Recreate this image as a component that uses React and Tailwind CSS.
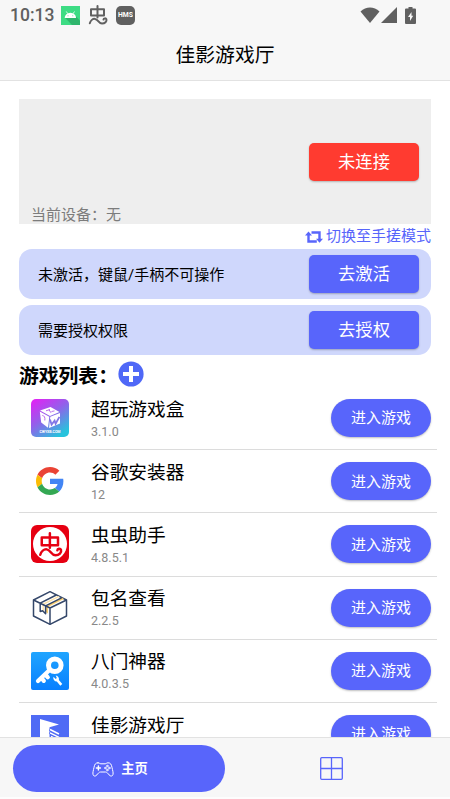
import React from 'react';

const ChongIcon = ({ className }) => (
  <svg viewBox="0 0 20 20" className={className} fill="none" stroke="currentColor" strokeWidth="2" strokeLinecap="round" strokeLinejoin="round">
    <path d="M3 4.300h13v6.200H3zM9.500 1v11.500" />
    <path d="M1.800 18.200c.8-2.600 3-4.600 5.200-4.300 3.200.4 3.400 4.700 7 4.700 3 0 5-2.200 4.400-4.200-.5-1.500-2.800-1.300-2.900.2" />
  </svg>
);

const AndroidIcon = () => (
  <svg viewBox="0 0 19 19" className="h-[19px] w-[19px]">
    <rect width="19" height="19" fill="#3ddc84" />
    <path d="M3.800 11.600L11 19h8v-4.500L14.500 10z" fill="#2fb56c" />
    <path d="M3.700 12a5.700 5.300 0 0 1 11.400 0z" fill="#fff" />
    <path d="M5.300 5.500l1.500 2.300M13.500 5.500L12 7.800" stroke="#fff" strokeWidth=".8" />
    <circle cx="7" cy="9.800" r=".5" fill="#3ddc84" />
    <circle cx="11.800" cy="9.800" r=".5" fill="#3ddc84" />
  </svg>
);

const BoxwIcon = () => (
  <svg viewBox="0 0 38 38" className="h-[38px] w-[38px]">
    <defs>
      <linearGradient id="cw" x1="0" y1="0" x2=".7" y2="1">
        <stop offset="0" stopColor="#e81df5" />
        <stop offset=".5" stopColor="#9360ea" />
        <stop offset="1" stopColor="#27c3dc" />
      </linearGradient>
    </defs>
    <rect width="38" height="38" rx="5" fill="url(#cw)" />
    <path d="M9 11.500L19.500 8l9 5-9.500 4z" fill="#fff" />
    <path d="M8.800 12.600l9.500 5.200-1.300 11-6.800-5.300z" fill="#fff" />
    <path d="M19.300 17.800l9.700-3.900v10.500l-11 4.600z" fill="#fff" />
    <path d="M19 20.500l1.600 5 3-3.800 1 3 3.800-6.800" fill="none" stroke="#8276e6" strokeWidth="1.800" />
    <path d="M15 11.800l4-1.300M18 10.800l2 3M20.500 12.500l3-.6" stroke="#b35cea" strokeWidth=".9" />
    <path d="M11.300 16.500c2 0 3 2 2.500 5" fill="none" stroke="#b35cea" strokeWidth=".9" />
    <text x="19" y="34" textAnchor="middle" fontSize="3.600" fontWeight="700" fill="#fff" fontFamily="Roboto, sans-serif" textLength="21">CWYXB.COM</text>
  </svg>
);

const GoogleIcon = () => (
  <svg viewBox="0 0 48 48" className="h-[28px] w-[28px]">
    <path fill="#ea4335" d="M24 9.500c3.540 0 6.710 1.220 9.210 3.600l6.850-6.850C35.900 2.380 30.470 0 24 0 14.620 0 6.510 5.380 2.560 13.220l7.980 6.190C12.430 13.720 17.740 9.500 24 9.500z" />
    <path fill="#4285f4" d="M46.980 24.550c0-1.570-.15-3.090-.38-4.550H24v9.020h12.940c-.58 2.960-2.260 5.480-4.780 7.180l7.730 6c4.510-4.180 7.090-10.360 7.090-17.650z" />
    <path fill="#fbbc05" d="M10.530 28.590c-.48-1.450-.76-2.990-.76-4.590s.27-3.140.76-4.590l-7.980-6.190C.92 16.460 0 20.120 0 24c0 3.880.92 7.540 2.560 10.780l7.970-6.190z" />
    <path fill="#34a853" d="M24 48c6.480 0 11.930-2.130 15.890-5.810l-7.730-6c-2.150 1.450-4.920 2.300-8.160 2.300-6.260 0-11.570-4.220-13.470-9.910l-7.980 6.190C6.510 42.620 14.620 48 24 48z" />
  </svg>
);

const ChongAppIcon = () => (
  <div className="flex h-[38px] w-[38px] items-center justify-center rounded-md bg-[#e60012]">
    <div className="flex h-[34px] w-[34px] items-center justify-center rounded-full bg-white text-[#e60012]">
      <ChongIcon className="h-[25px] w-[25px]" />
    </div>
  </div>
);

const PackageIcon = () => (
  <svg viewBox="0 0 38 38" className="h-[38px] w-[38px]" fill="none" stroke="#34476a" strokeWidth="1.500" strokeLinejoin="round">
    <path d="M2.500 11L19 2.700 35.500 11v16L19 35.300 2.500 27z" fill="#fff" />
    <path d="M14.800 16.800L31 8.800l2 1.200-16 8v6.600l-2.200-1.600z" fill="#fbd071" stroke="none" />
    <path d="M11.500 14.800L27.200 7l1.500.8-15.800 8v6.400l-1.400.5z" fill="#fde3a8" stroke="none" />
    <path d="M2.500 11L19 19l16.500-8M19 19v16.300M9.200 14.200L25.300 6M14.600 16.800L30.600 8.800M9.200 14.200v8.300l2.400-.7 3 2.900v-7.900" />
  </svg>
);

const KeyIcon = () => (
  <svg viewBox="0 0 38 38" className="h-[38px] w-[38px]">
    <defs>
      <linearGradient id="key" x1="0" y1="0" x2="0" y2="1">
        <stop offset="0" stopColor="#20a5ff" />
        <stop offset="1" stopColor="#087fff" />
      </linearGradient>
    </defs>
    <rect width="38" height="38" rx="2" fill="url(#key)" />
    <circle cx="23.800" cy="13.200" r="6.300" fill="none" stroke="#fff" strokeWidth="5" />
    <path d="M18.300 18.300L7 29M10.500 26l2.300 2.800M14.300 22.500l2.500 2.800" stroke="#fff" strokeWidth="4.200" strokeLinecap="round" />
    <path d="M22.500 24.800a3.600 3.600 0 0 0 3.300 4.800l3.500 4.200 2-1.900-3.400-4a3.600 3.600 0 0 0-3.200-4.400l1.100 2.400-1.100 1.200z" fill="#fff" />
  </svg>
);

const JiayingIcon = () => (
  <svg viewBox="0 0 38 38" className="h-[38px] w-[38px]">
    <rect width="38" height="38" fill="#4f6bf5" />
    <path d="M9 4l19 5.500-9.500 2.800V27H9z" fill="#fff" />
    <path d="M18.500 14.500l10 4.500M18.500 17.500l9.500 4.300M20 21l7 3.500" stroke="#4f6bf5" strokeWidth="3" />
    <path d="M19 14.500l9 4.500M19 17.800l9 4.500M20 21.500l7 3.500" stroke="#fff" strokeWidth="1.500" />
  </svg>
);

const GamepadIcon = () => (
  <svg viewBox="0 0 22 15" className="h-[15px] w-[22px]" fill="none" stroke="#fff" strokeWidth="1" strokeLinecap="round" strokeLinejoin="round">
    <path d="M6 .8c1.600 0 1.600 1 3 1h4c1.400 0 1.400-1 3-1 2.600 0 3.300 1.500 4 4.600.6 2.900 1.400 5.300 1 7-.4 2-2.500 2.200-3.900.5-1.300-1.600-2.200-2.900-3.600-2.900h-5C7.100 10 6.200 11.300 4.900 12.900 3.500 14.600 1.400 14.400 1 12.400c-.4-1.700.4-4.100 1-7C2.700 2.300 3.400.8 6 .8z" />
    <path d="M6.400 4.100v4M4.400 6.100h4" strokeWidth="1.500" />
    <g strokeWidth=".9">
      <circle cx="15.300" cy="4" r=".8" />
      <circle cx="15.300" cy="8" r=".8" />
      <circle cx="13.300" cy="6" r=".8" />
      <circle cx="17.300" cy="6" r=".8" />
    </g>
  </svg>
);

const games = [
  { name: '超玩游戏盒', version: '3.1.0', icon: BoxwIcon },
  { name: '谷歌安装器', version: '12', icon: GoogleIcon },
  { name: '虫虫助手', version: '4.8.5.1', icon: ChongAppIcon },
  { name: '包名查看', version: '2.2.5', icon: PackageIcon },
  { name: '八门神器', version: '4.0.3.5', icon: KeyIcon },
  { name: '佳影游戏厅', version: '', icon: JiayingIcon },
];

const notices = [
  { text: '未激活，键鼠/手柄不可操作', action: '去激活' },
  { text: '需要授权权限', action: '去授权' },
];

const StatusBar = () => (
  <div className="flex h-[30px] items-center pl-[10px] pr-[34px] text-[#606060]">
    <span className="w-[50px] pt-[2px] text-[17.500px] font-medium leading-none">10:13</span>
    <div className="ml-px flex items-center">
      <AndroidIcon />
      <ChongIcon className="ml-[8px] h-5 w-5" />
      <span className="ml-[8px] flex h-[19px] w-[19px] items-center justify-center rounded-[5px] bg-[#606060]">
        <svg viewBox="0 0 15 6" className="h-[6px] w-[15px]">
          <text x="0" y="5.300" textLength="15" lengthAdjust="spacingAndGlyphs" fontSize="6.500" fontWeight="700" fill="#fff">HMS</text>
        </svg>
      </span>
    </div>
    <div className="ml-auto flex items-center">
      <svg viewBox="0 0 20 16" className="h-4 w-5" fill="currentColor">
        <path d="M.5 4.500C6-.8 14-.8 19.500 4.500L10 16z" />
      </svg>
      <svg viewBox="0 0 16 16" className="ml-px h-4 w-4" fill="currentColor">
        <path d="M16 0v16H0z" />
      </svg>
      <svg viewBox="0 0 11 17" className="ml-[8px] h-[17px] w-[11px]" fill="currentColor">
        <path d="M3.500 0h4v1.500H10a1 1 0 0 1 1 1V16a1 1 0 0 1-1 1H1a1 1 0 0 1-1-1V2.500a1 1 0 0 1 1-1h2.500z" />
        <path d="M6.500 5L3 10h2v4l3.200-5.200H6.500z" fill="#f7f7f7" />
      </svg>
    </div>
  </div>
);

const App = () => {
  return (
    <div className="flex h-[799px] w-[450px] flex-col overflow-hidden bg-white font-[Roboto,'Noto_Sans_CJK_SC',sans-serif] text-black">
      <header className="h-[81px] shrink-0 border-b border-[#e2e2e2] bg-[#f7f7f7]">
        <StatusBar />
        <h1 className="pt-[12px] text-center text-[19.800px] leading-[28px]">佳影游戏厅</h1>
      </header>

      <main className="min-h-0 flex-1 overflow-hidden pl-[19px] pt-[18px]">
        <div className="w-[412px]">
          {/* Appareil */}
          <section className="flex h-[125px] flex-col bg-[#eee] pl-3 pr-3">
            <button className="ml-auto mt-[44px] h-[38px] w-[110px] rounded-[5px] bg-[#ff3b30] pt-[2px] text-[17.300px] text-white shadow-[0_1px_2px_rgba(0,0,0,0.25)]">未连接</button>
            <p className="mt-auto text-[15px] leading-[18px] text-[#7c7c7c]">当前设备：无</p>
          </section>

          <div className="flex h-[25px] items-center justify-end gap-[3px] pb-[2px] text-[15px] leading-5 text-[#5865fb]">
            <svg viewBox="0 0 18 12" className="mt-[3px] h-3 w-[18px]" fill="none" stroke="currentColor" strokeWidth="2.400">
              <path d="M3.500 3v7.500h8.300M6.500 1.500h8V9" />
              <path d="M0 4.500L3.500.5 7 4.500zM11 7.800l3.500 4 3.500-4z" fill="currentColor" stroke="none" />
            </svg>
            切换至手搓模式
          </div>

          {/* Activation et autorisation */}
          <div className="space-y-[6px]">
            {notices.map((item) => (
              <div key={item.action} className="flex h-[50px] items-center justify-between rounded-[13px] bg-[#cfd7fc] pl-[19px] pr-3">
                <span className="pt-[2px] text-[15px]">{item.text}</span>
                <button className="h-[38px] w-[110px] rounded-[5px] bg-[#5865fb] pt-[2px] text-[17.300px] text-white shadow-[0_1px_2px_rgba(0,0,0,0.25)]">{item.action}</button>
              </div>
            ))}
          </div>

          <h2 className="flex h-[32px] items-center pt-[6px] text-[19.800px] font-bold leading-none">
            <span className="w-[99px] pt-[5px]">游戏列表：</span>
            <svg viewBox="0 0 26 26" className="h-[26px] w-[26px]">
              <circle cx="13" cy="13" r="12.600" fill="#4f68f7" />
              <path d="M13 5v16M5 13h16" stroke="#fff" strokeWidth="4" />
            </svg>
          </h2>
        </div>

        {/* Liste des jeux */}
        <ul className="w-[418px]">
          {games.map((game) => (
            <li key={game.name} className="flex h-[63.200px] items-center border-b border-[#dcdcdc] pl-3 pr-[6px]">
              <div className="flex h-[38px] w-[38px] items-center justify-center">
                <game.icon />
              </div>
              <div className="ml-[22px] h-[43px] pt-px">
                <div className="text-[18.700px] leading-[25px]">{game.name}</div>
                <div className="text-[12.500px] leading-[18px] text-[#888]">{game.version}</div>
              </div>
              <button className="ml-auto h-[38px] w-[100px] rounded-full bg-[#5865fb] pt-px text-[15px] text-white shadow-[0_1px_2px_rgba(0,0,0,0.25)]">进入游戏</button>
            </li>
          ))}
        </ul>
      </main>

      <nav className="flex h-[62px] shrink-0 items-center border-b-2 border-t border-b-[#fdfdfd] border-t-[#e2e2e2] bg-[#f7f7f7] pl-[13px] pt-[2px]">
        <button className="flex h-[47px] w-[212px] items-center justify-center gap-[7px] rounded-full bg-[#5865fb] pl-[2px] pt-px text-[13.300px] font-bold text-white">
          <GamepadIcon />
          主页
        </button>
        <button className="flex flex-1 justify-center pr-[13px]">
          <svg viewBox="0 0 23 23" className="h-[23px] w-[23px]" fill="none" stroke="#5865fb" strokeWidth="1.300">
            <rect x=".7" y=".7" width="21.600" height="21.600" rx="1" />
            <path d="M11.500 1v21M1 11.500h21" />
          </svg>
        </button>
      </nav>
    </div>
  );
};

export default App;
